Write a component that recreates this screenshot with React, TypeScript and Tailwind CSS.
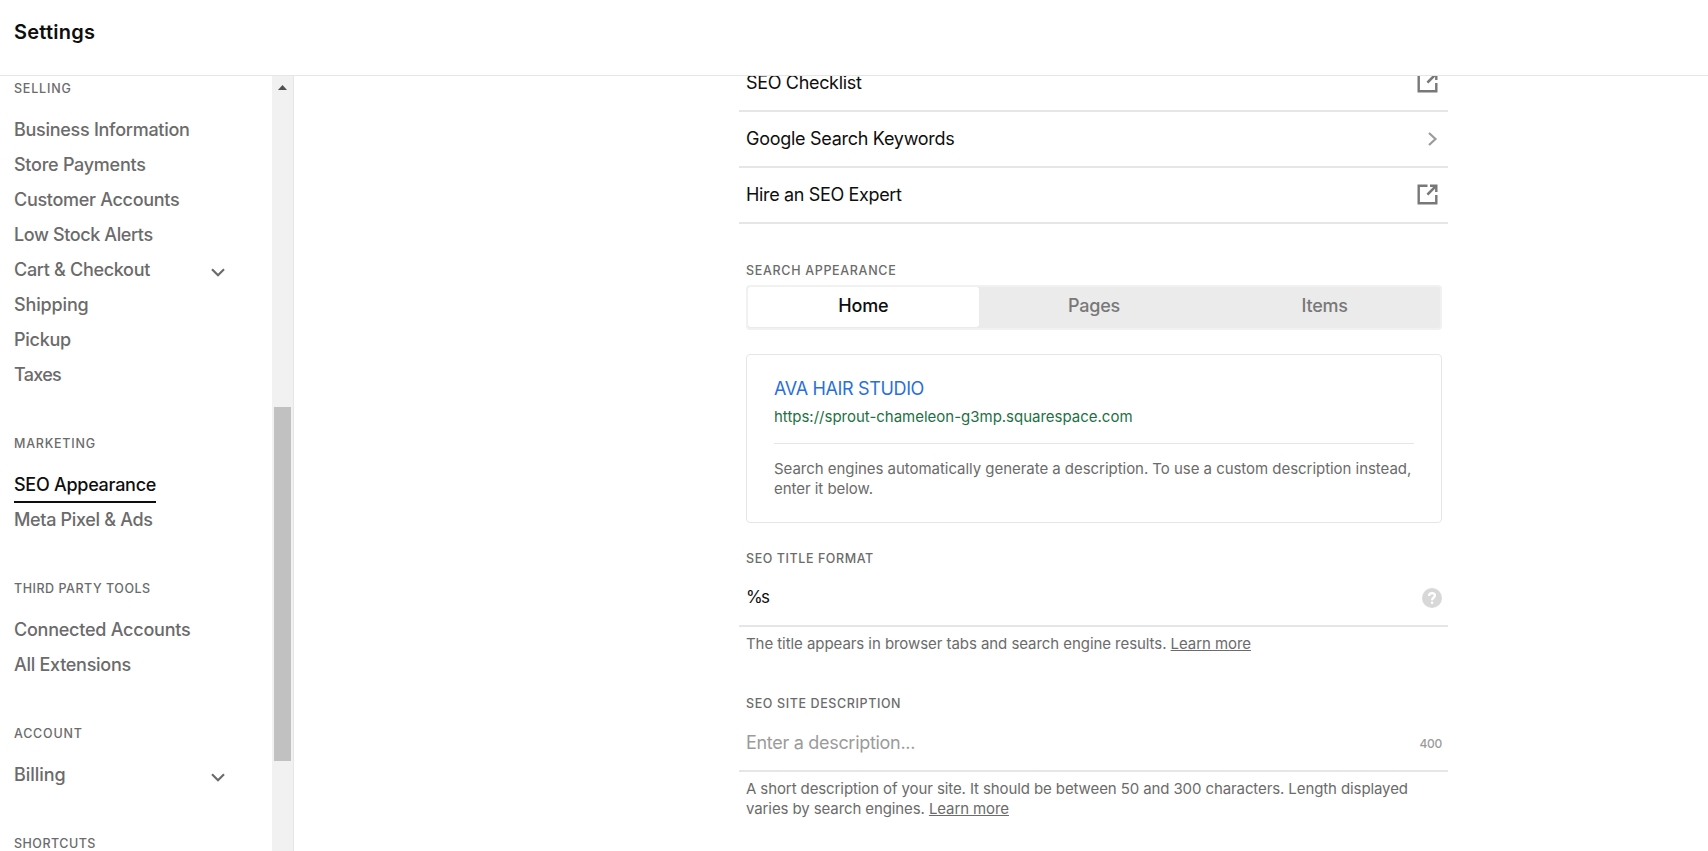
import { clsx } from "clsx";

type NavItem = {
  label: string;
  spacing: string;
  active?: boolean;
  expandable?: boolean;
};

type NavGroup = {
  title: string;
  spacing: string;
  items: NavItem[];
};

const navGroups: NavGroup[] = [
  {
    title: "Selling",
    spacing: "tracking-[0.8px]",
    items: [
      { label: "Business Information", spacing: "tracking-[-0.28px]" },
      { label: "Store Payments", spacing: "tracking-[-0.26px]" },
      { label: "Customer Accounts", spacing: "tracking-[-0.3px]" },
      { label: "Low Stock Alerts", spacing: "tracking-[-0.39px]" },
      { label: "Cart & Checkout", spacing: "tracking-[-0.31px]", expandable: true },
      { label: "Shipping", spacing: "tracking-[-0.15px]" },
      { label: "Pickup", spacing: "tracking-[-0.26px]" },
      { label: "Taxes", spacing: "tracking-[-0.7px]" },
    ],
  },
  {
    title: "Marketing",
    spacing: "tracking-[0.77px]",
    items: [
      { label: "SEO Appearance", spacing: "tracking-[-0.28px]", active: true },
      { label: "Meta Pixel & Ads", spacing: "tracking-[-0.33px]" },
    ],
  },
  {
    title: "Third Party Tools",
    spacing: "tracking-[0.52px]",
    items: [
      { label: "Connected Accounts", spacing: "tracking-[-0.24px]" },
      { label: "All Extensions", spacing: "tracking-[-0.28px]" },
    ],
  },
  {
    title: "Account",
    spacing: "tracking-[0.77px]",
    items: [{ label: "Billing", spacing: "tracking-[-0.05px]", expandable: true }],
  },
  { title: "Shortcuts", spacing: "tracking-[0.48px]", items: [] },
];

function ChevronDown() {
  return (
    <svg width="14" height="9" viewBox="0 0 14 9" fill="none" className="mt-[3px]">
      <path d="M1 1.2L7 7.2L13 1.2" stroke="#6b6b6b" strokeWidth="2.2" />
    </svg>
  );
}

function ChevronRight() {
  return (
    <svg width="10" height="14" viewBox="0 0 10 14" fill="none">
      <path d="M1 1L7.5 7L1 13" stroke="#9b9b9b" strokeWidth="2.2" />
    </svg>
  );
}

function ExternalIcon() {
  return (
    <svg width="21" height="21" viewBox="0 0 21 21" fill="none" stroke="#787878" className="mb-px">
      <path d="M10.5 1.7H1.7V19.3H19.3V11" strokeWidth="2.4" />
      <path d="M13 1.7H19.3V8" strokeWidth="2.4" />
      <path d="M18.8 2.2L10.4 10.6" strokeWidth="2.6" />
    </svg>
  );
}

function HelpIcon() {
  return (
    <svg width="20" height="20" viewBox="0 0 20 20" fill="none">
      <circle cx="10" cy="10" r="10" fill="#d8d8d8" />
      <path
        d="M7.1 7.9C7.1 6.1 8.3 5.2 10 5.2C11.8 5.2 12.9 6.2 12.9 7.6C12.9 9.5 10.1 9.6 10.1 12.2"
        stroke="#fff"
        strokeWidth="2.3"
      />
      <rect x="8.9" y="13.6" width="2.4" height="2.4" rx="0.8" fill="#fff" />
    </svg>
  );
}

function Sidebar() {
  return (
    <aside className="flex w-[294px] shrink-0 border-r border-[#e6e6e6]">
      <nav className="flex-1 overflow-hidden pt-[3px] pl-[14px]">
        {navGroups.map((group) => (
          <section key={group.title} className="mb-[41px]">
            <h2
              className={clsx(
                "mb-3.5 h-5 text-[12.5px] leading-5 font-medium text-[#6b6b6b] uppercase",
                group.spacing,
              )}
            >
              {group.title}
            </h2>
            <ul>
              {group.items.map((item) => (
                <li
                  key={item.label}
                  className="flex h-[35px] w-[211px] items-center justify-between"
                >
                  <a
                    className={clsx(
                      "h-[35px] text-[18px] leading-[33px] font-medium whitespace-nowrap",
                      item.spacing,
                      item.active
                        ? "border-b-2 border-[#0e0e0e] text-[#0e0e0e]"
                        : "text-[#6b6b6b]",
                    )}
                  >
                    {item.label}
                  </a>
                  {item.expandable && <ChevronDown />}
                </li>
              ))}
            </ul>
          </section>
        ))}
      </nav>
      <div className="flex w-[21px] flex-col bg-[#f1f1f1] pt-[9px]">
        <svg width="9" height="5" viewBox="0 0 9 5" className="ml-1.5">
          <path d="M4.5 0L9 5H0Z" fill="#505050" />
        </svg>
        <div className="mt-[317px] ml-[2px] h-[354px] w-[17px] bg-[#c1c1c1]" />
      </div>
    </aside>
  );
}

function LinkRow({ label, spacing, external }: { label: string; spacing: string; external?: boolean }) {
  return (
    <div className="flex h-14 items-center justify-between border-b-2 border-[#e6e6e6] pr-[10px] pl-[7px]">
      <span className={clsx("pb-0.5 text-[18px] text-[#0e0e0e]", spacing)}>{label}</span>
      {external ? <ExternalIcon /> : <ChevronRight />}
    </div>
  );
}

function FieldLabel({ children, className }: { children: string; className?: string }) {
  return (
    <h3
      className={clsx(
        "h-5 pl-[7px] text-[12.5px] leading-5 font-medium text-[#6b6b6b] uppercase",
        className,
      )}
    >
      {children}
    </h3>
  );
}

export default function App() {
  return (
    <div className="flex h-[851px] w-[1708px] flex-col overflow-hidden bg-white font-[Inter,sans-serif]">
      <header className="flex h-[76px] shrink-0 border-b border-[#e6e6e6] pt-[17px] pl-[14px]">
        <h1 className="text-[20px] leading-[30px] font-semibold tracking-[0.25px] text-[#0e0e0e]">Settings</h1>
      </header>

      <div className="flex min-h-0 flex-1">
        <Sidebar />

        <main className="flex-1 overflow-hidden pl-[445px]">
          <div className="w-[709px]">
            <div className="-mt-5">
              <LinkRow label="SEO Checklist" spacing="tracking-[-0.33px]" external />
              <LinkRow label="Google Search Keywords" spacing="tracking-[-0.28px]" />
              <LinkRow label="Hire an SEO Expert" spacing="tracking-[-0.35px]" external />
            </div>

            <FieldLabel className="mt-[37px] tracking-[0.68px]">Search Appearance</FieldLabel>
            <div className="mx-[7px] mt-1 flex h-[45px] w-[696px] rounded border-2 border-[#f1f1f1] bg-[#ebebeb] text-[18px] font-medium tracking-[-0.2px]">
              <button className="mb-px flex-1 rounded-[3px] bg-white pb-[3px] text-center text-[#0e0e0e]">Home</button>
              <button className="flex-1 pb-1 text-[#787878]">Pages</button>
              <button className="flex-1 pb-1 text-[#787878]">Items</button>
            </div>

            <div className="mx-[7px] mt-6 h-[169px] w-[696px] rounded border border-[#e6e6e6] px-[27px] pt-5">
              <p className="h-7 text-[18px] leading-7 tracking-[-0.35px] text-[#2a6fdb]">AVA HAIR STUDIO</p>
              <p className="h-7 text-[15px] leading-7 tracking-[-0.01px] text-[#1d7044]">
                https://sprout-chameleon-g3mp.squarespace.com
              </p>
              <p className="mt-3 border-t border-[#e6e6e6] pt-[15px] text-[15px] leading-5 tracking-[-0.04px] whitespace-nowrap text-[#6b6b6b]">
                Search engines automatically generate a description. To use a custom description instead,
                <br />
                enter it below.
              </p>
            </div>

            <FieldLabel className="mt-[26px] tracking-[0.57px]">SEO Title Format</FieldLabel>
            <div className="mt-0.5 flex h-[56px] items-center justify-between border-b-2 border-[#e6e6e6] pr-[6px] pl-[7px]">
              <span className="text-[17px] tracking-[-1.6px] text-[#0e0e0e]">%s</span>
              <HelpIcon />
            </div>
            <p className="mt-[7px] pl-[7px] text-[15px] leading-5 tracking-[-0.06px] text-[#6b6b6b]">
              The title appears in browser tabs and search engine results. <a className="underline">Learn more</a>
            </p>

            <FieldLabel className="mt-10 tracking-[0.61px]">SEO Site Description</FieldLabel>
            <div className="mt-0.5 flex h-[56px] items-center justify-between border-b-2 border-[#e6e6e6] pr-[6px] pl-[7px]">
              <span className="pb-0.5 text-[18px] tracking-[-0.3px] text-[#9b9b9b]">Enter a description...</span>
              <span className="pt-0.5 text-[12px] font-medium tracking-[-0.3px] text-[#9b9b9b]">400</span>
            </div>
            <p className="mt-[7px] pl-[7px] text-[15px] leading-5 tracking-[-0.1px] whitespace-nowrap text-[#6b6b6b]">
              A short description of your site. It should be between 50 and 300 characters. Length displayed
              <br />
              varies by search engines. <a className="underline">Learn more</a>
            </p>
          </div>
        </main>
      </div>
    </div>
  );
}
